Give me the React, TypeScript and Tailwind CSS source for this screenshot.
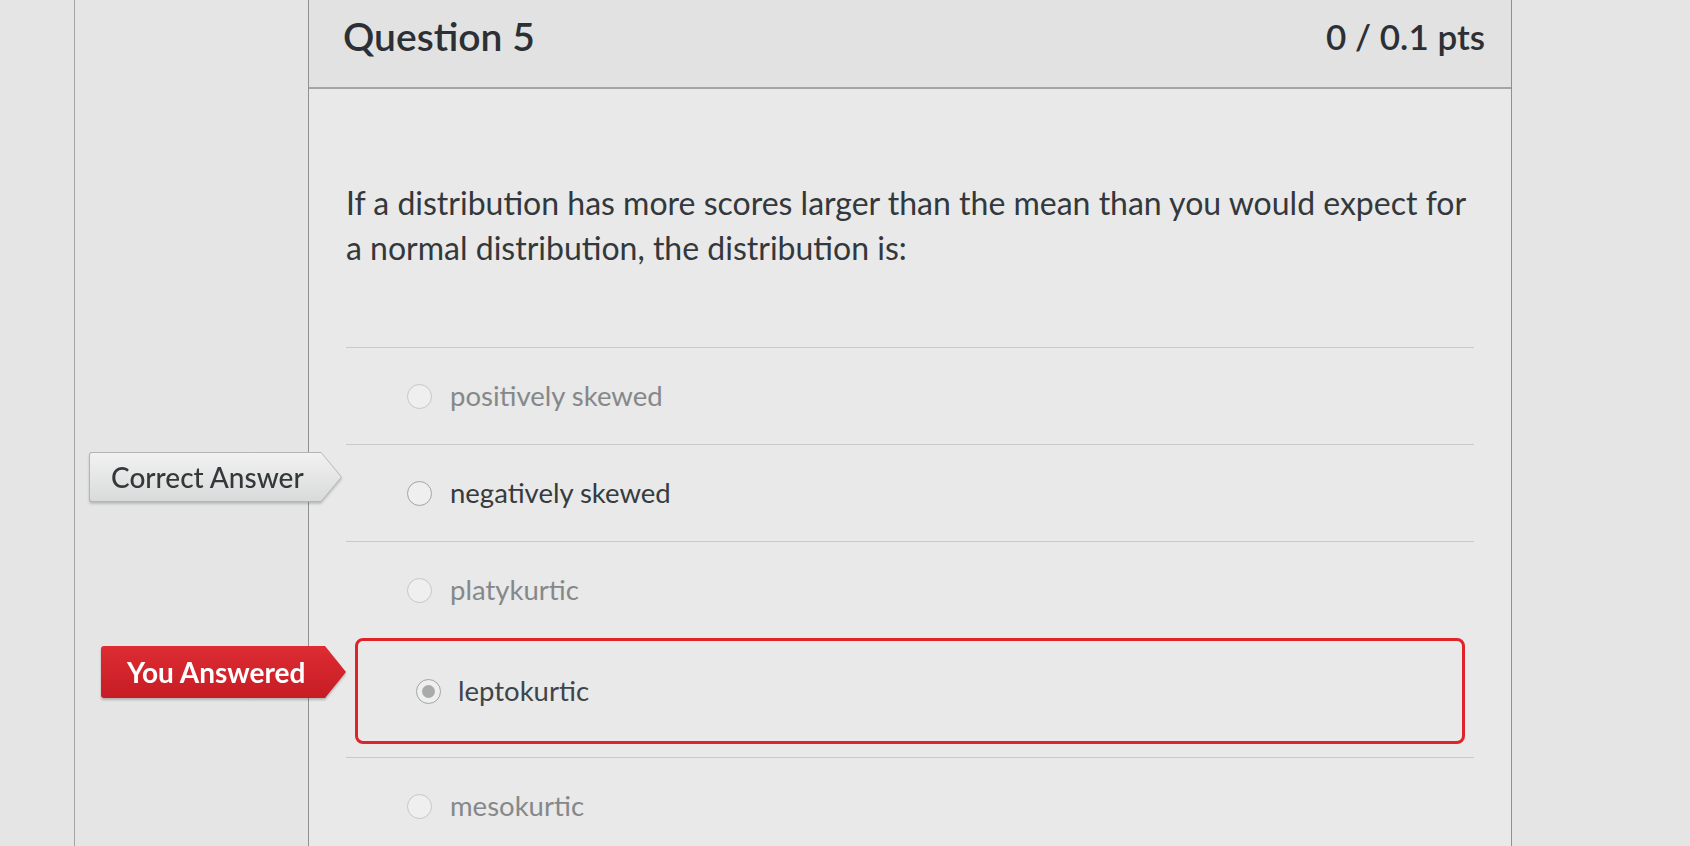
import React from 'react';

type Answer = {
  text: string;
  tone: 'dim' | 'strong';
  tag?: 'correct' | 'you';
  selected?: boolean;
};

const answers: Answer[] = [
  { text: 'positively skewed', tone: 'dim' },
  { text: 'negatively skewed', tone: 'strong', tag: 'correct' },
  { text: 'platykurtic', tone: 'dim' },
  { text: 'leptokurtic', tone: 'strong', tag: 'you', selected: true },
  { text: 'mesokurtic', tone: 'dim' },
];

const Tag: React.FC<{ kind: 'correct' | 'you' }> = ({ kind }) => {
  if (kind === 'correct') {
    return (
      <div className="absolute top-[7px] right-[calc(100%+4px)] drop-shadow-[0_2px_1px_rgba(0,0,0,0.18)]">
        <div className="h-[50px] w-[253px] p-px rounded-l-[3px] bg-[#b4b5b5] [clip-path:polygon(0_0,calc(100%_-_21px)_0,100%_50%,calc(100%_-_21px)_100%,0_100%)]">
          <div className="h-full w-full rounded-l-[2px] bg-gradient-to-b from-[#f1f2f1] to-[#d9dada] flex items-center pl-[21px] text-[28px] font-medium text-[#35383b] [clip-path:polygon(0_0,calc(100%_-_20px)_0,100%_50%,calc(100%_-_20px)_100%,0_100%)]">
            Correct Answer
          </div>
        </div>
      </div>
    );
  }
  return (
    <div className="absolute top-[8px] right-full drop-shadow-[0_2px_1px_rgba(0,0,0,0.22)]">
      <div className="h-[52px] w-[245px] rounded-l-[3px] bg-gradient-to-b from-[#de2c33] to-[#c61c24] flex items-center pl-[26px] text-[28px] font-bold text-white [clip-path:polygon(0_0,calc(100%_-_21px)_0,100%_50%,calc(100%_-_21px)_100%,0_100%)]">
        You Answered
      </div>
    </div>
  );
};

const Radio: React.FC<{ selected?: boolean; dim?: boolean }> = ({ selected, dim }) => (
  <span
    className={`flex h-[25px] w-[25px] shrink-0 items-center justify-center rounded-full border bg-[#eeefee] ${
      dim ? 'border-[#c6c8c7]' : 'border-[#a3a5a5]'
    }`}
  >
    {selected && <span className="h-[13px] w-[13px] rounded-full bg-[#a9aaaa]" />}
  </span>
);

export default function App() {
  return (
    <div className="flex h-[846px] w-full overflow-hidden bg-[#e4e5e4] font-['Lato','Open_Sans',sans-serif] text-[#2f3438]">
      {/* left margin + outer rule */}
      <div className="w-[75px] shrink-0 border-r border-[#a2a3a3]" />
      <div className="w-[233px] shrink-0" />

      {/* question panel */}
      <div className="flex w-[1204px] shrink-0 flex-col border-x border-[#8f9090] bg-[#e8e9e8]">
        <div className="flex h-[89px] shrink-0 items-start justify-between border-b-2 border-[#a4a5a5] bg-[#e1e2e1] pl-[34px] pr-[26px] pt-[10px]">
          <h2 className="text-[39px] font-semibold leading-[52px] text-[#2c3034]">Question 5</h2>
          <span className="text-[35px] font-semibold leading-[52px] text-[#2c3034]">0 / 0.1 pts</span>
        </div>

        <div className="flex flex-col px-[37px] pt-[91px]">
          <p className="max-w-[1122px] text-[32px] leading-[45px] text-[#33383c]">
            If a distribution has more scores larger than the mean than you would expect for a normal distribution, the distribution is:
          </p>

          <div className="mt-[77px] flex flex-col">
            {answers.map((a) =>
              a.selected ? (
                <div key={a.text} className="relative mb-[13px]">
                  {a.tag && <Tag kind={a.tag} />}
                  <div className="mx-[9px] flex h-[106px] items-center gap-[17px] rounded-[8px] border-[3px] border-[#e0232b] pl-[58px]">
                    <Radio selected />
                    <span className="text-[27.5px] text-[#3f4448]">{a.text}</span>
                  </div>
                </div>
              ) : (
                <div
                  key={a.text}
                  className="relative flex h-[97px] items-center gap-[18px] border-t border-[#c8c9c9] pl-[61px]"
                >
                  {a.tag && <Tag kind={a.tag} />}
                  <Radio dim={a.tone === 'dim'} />
                  <span
                    className={`text-[27.5px] ${a.tone === 'dim' ? 'text-[#85888b]' : 'text-[#363b3f]'}`}
                  >
                    {a.text}
                  </span>
                </div>
              )
            )}
          </div>
        </div>
      </div>

      <div className="flex-1" />
    </div>
  );
}
